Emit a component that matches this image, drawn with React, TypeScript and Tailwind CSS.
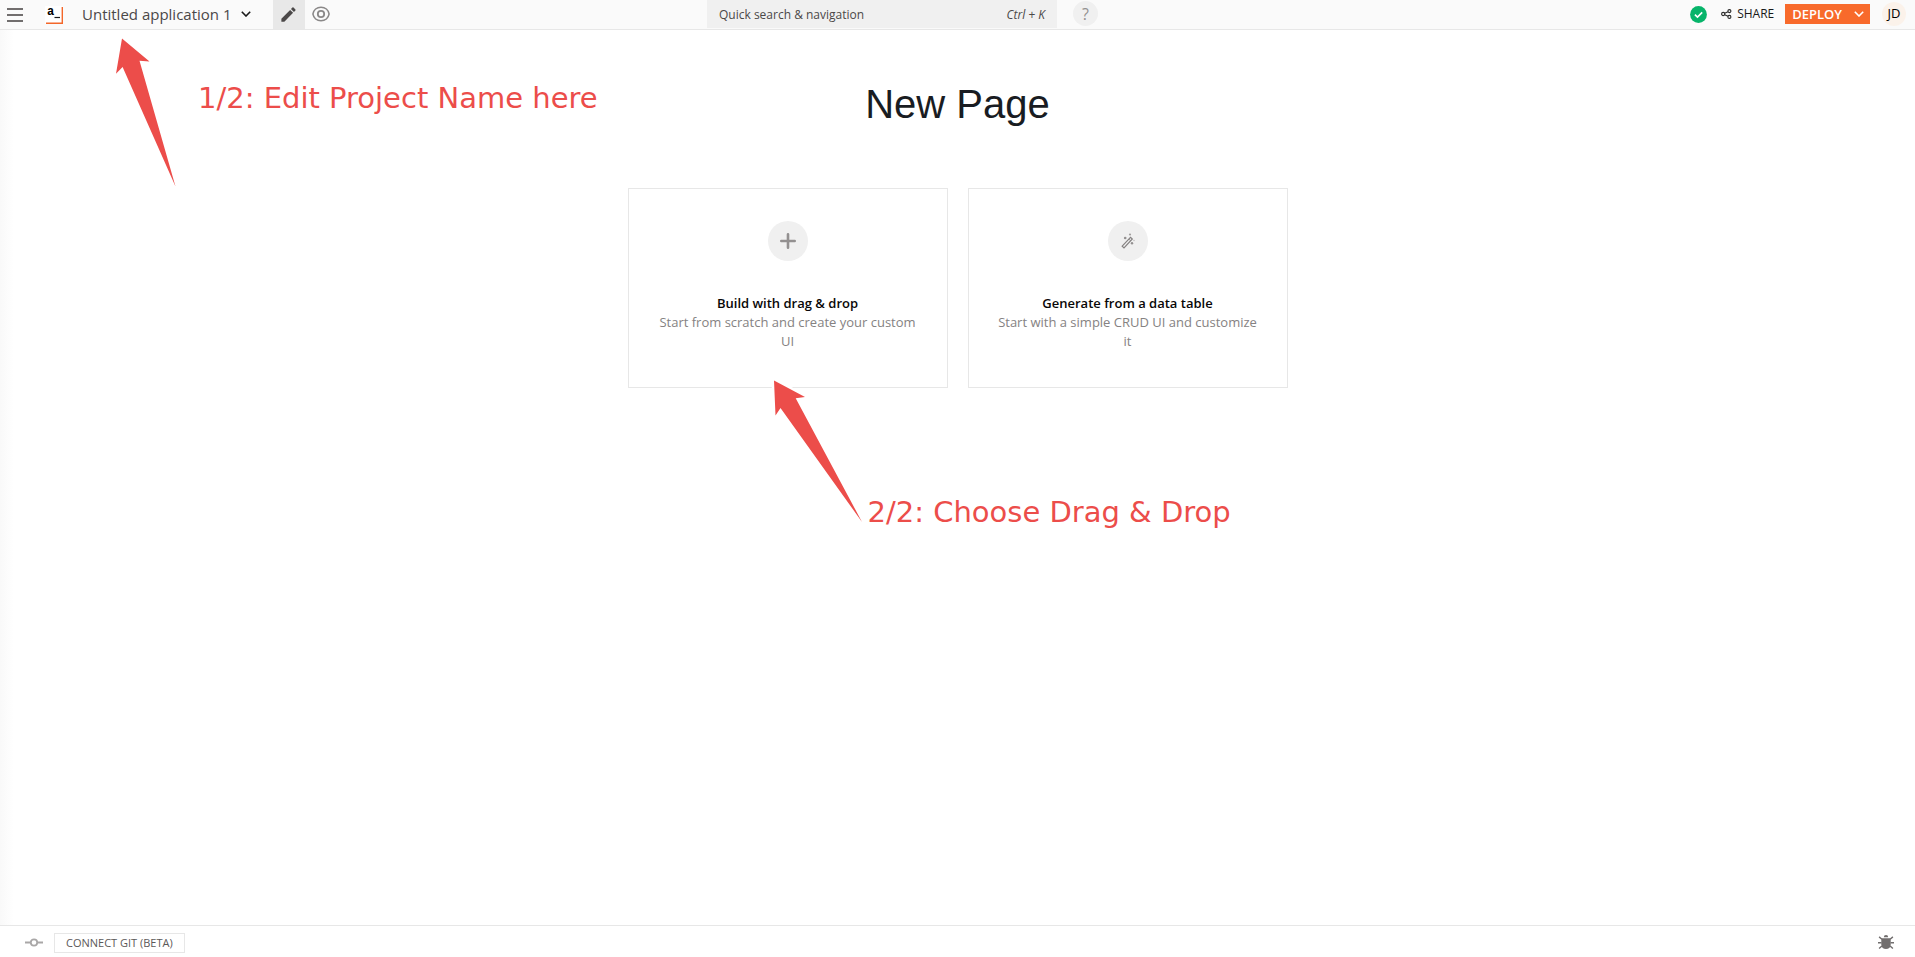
import type { ReactNode } from "react";
import { MdEdit } from "react-icons/md";

const MenuIcon = () => (
  <svg width="16" height="14" viewBox="0 0 16 14" stroke="#716e6e" strokeWidth="2">
    <path d="M0 1h16M0 7h16M0 13h16" />
  </svg>
);

const Logo = () => (
  <span className="relative block size-[18px] bg-white">
    <svg className="absolute inset-0" width="18" height="18" viewBox="0 0 18 18" fill="none">
      <path d="M1 17.300h16.300V1" stroke="#f3672a" strokeWidth="1.400" />
      <path d="M9.500 11.500h5.500" stroke="#191919" strokeWidth="1.200" />
    </svg>
    <span className="absolute -top-0.5 left-0.5 font-['Liberation_Mono',monospace] text-[12px] leading-4 font-bold text-black">
      a
    </span>
  </span>
);

const Chevron = ({ className }: { className: string }) => (
  <svg className={className} width="10" height="6" viewBox="0 0 10 6" fill="none" stroke="currentColor" strokeWidth="1.6">
    <path d="M0.8 0.8 5 5 9.2 0.8" />
  </svg>
);

const EyeIcon = () => (
  <svg width="18" height="16" viewBox="0 0 18 16" fill="none" stroke="#8a8888" strokeWidth="1.5">
    <path d="M9 1.2C4.8 1.2 1.6 4.2 0.9 8c.7 3.8 3.9 6.8 8.1 6.8s7.4-3 8.1-6.8C16.400 4.200 13.200 1.200 9 1.200Z" />
    <circle cx="9" cy="8" r="3.200" strokeWidth="1.800" />
  </svg>
);

const CheckCircle = () => (
  <svg width="17" height="17" viewBox="0 0 17 17" fill="none">
    <circle cx="8.500" cy="8.500" r="8.400" fill="#07b46a" />
    <path d="m4.900 8.600 2.600 2.500 4.700-4.700" stroke="#fff" strokeWidth="1.600" />
  </svg>
);

const ShareIcon = () => (
  <svg width="11" height="10" viewBox="0 0 11 10" fill="none" stroke="#2b2b2b" strokeWidth="1.100">
    <circle cx="2.200" cy="5" r="1.600" />
    <circle cx="8.400" cy="2.100" r="1.500" />
    <circle cx="8.400" cy="7.900" r="1.500" />
    <path d="M3.700 4.300 7 2.700M3.700 5.700 7 7.300" />
  </svg>
);

const PlusIcon = () => (
  <svg width="16" height="16" viewBox="0 0 16 16" stroke="#939090" strokeWidth="2.600" strokeLinecap="round">
    <path d="M8 1.300v13.400M1.300 8h13.400" />
  </svg>
);

const WandIcon = () => (
  <svg width="14" height="16" viewBox="0 0 14 16" fill="none">
    <path d="m1.200 13.200 8.300-8.900 1.800 1.700-8.300 8.900Z" stroke="#858282" strokeWidth="1.200" />
    <path d="m8 6.200 1.500 1.500" stroke="#858282" />
    <circle cx="4.200" cy="5" r="1.300" fill="#939090" />
    <circle cx="9" cy="1.500" r="1.100" fill="#a3a0a0" />
    <circle cx="11" cy="10.200" r="1.200" fill="#939090" />
    <circle cx="13" cy="7.500" r="0.800" fill="#c4c2c2" />
  </svg>
);

const CommitIcon = () => (
  <svg width="18" height="9" viewBox="0 0 18 9" fill="none" stroke="#a9a7a7" strokeWidth="1.800">
    <circle cx="9" cy="4.500" r="3.200" />
    <path d="M0 4.500h5.600M12.400 4.500H18" />
  </svg>
);

const BugIcon = () => (
  <svg width="16" height="15" viewBox="0 0 16 15" fill="#716e6e">
    <path d="M5.800 2.300a2.200 2.200 0 0 1 4.400 0ZM3.300 3.200h9.400v6.600c0 2.600-2.200 4.300-4.700 4.300s-4.700-1.700-4.700-4.300Z" />
    <path
      d="M1.100 1.900 3.900 4.200M14.900 1.900l-2.800 2.300M0 7.700h3.500M16 7.700h-3.500M1.100 13.500l2.800-2.600M14.900 13.500l-2.800-2.600"
      stroke="#716e6e"
      strokeWidth="1.400"
    />
  </svg>
);

function Card({ icon, title, lines }: { icon: ReactNode; title: string; lines: [string, string] }) {
  return (
    <button
      type="button"
      className="flex h-[200px] w-80 flex-col items-center border border-[#e7e7e7] bg-white pt-8 text-[13px] leading-[19px]"
    >
      <span className="flex size-10 items-center justify-center rounded-full bg-[#f0f0f0]">{icon}</span>
      <span className="mt-[33px] font-semibold text-[#090707]">{title}</span>
      <span className="text-[#858282]">
        {lines[0]}
        <br />
        {lines[1]}
      </span>
    </button>
  );
}

export default function App() {
  return (
    <div className="flex min-h-screen flex-col bg-white font-['Open_Sans',sans-serif]">
      <header className="flex h-[30px] items-stretch border-b border-[#e7e7e7] bg-[#fafafa]">
        <div className="flex w-[707px] items-center">
          <button type="button" aria-label="Menu" className="ml-[7px]">
            <MenuIcon />
          </button>
          <a href="#home" aria-label="Home" className="ml-[22px]">
            <Logo />
          </a>
          <button
            type="button"
            className="ml-[19px] flex items-center gap-[9px] pb-0.5 text-[15px] leading-5 font-medium text-[#4b4848]"
          >
            Untitled application 1
            <Chevron className="text-[#191919]" />
          </button>
          <button
            type="button"
            aria-label="Edit mode"
            className="ml-[22px] flex w-8 items-center justify-center self-stretch bg-[#e8e8e8]"
          >
            <MdEdit size={19} color="#4b4848" />
          </button>
          <button type="button" aria-label="Preview mode" className="ml-[7px] pb-px">
            <EyeIcon />
          </button>
        </div>
        <label className="flex h-7 w-[350px] items-center bg-[#f0f0f0] px-3 pt-0.5 text-xs text-[#4b4848]">
          <input
            type="text"
            aria-label="Quick search"
            placeholder="Quick search & navigation"
            className="min-w-0 flex-1 bg-transparent outline-none placeholder:text-[#4b4848]"
          />
          <span className="italic">Ctrl + K</span>
        </label>
        <button
          type="button"
          aria-label="Help"
          className="ml-4 mt-px size-[25px] rounded-full bg-[#f0f0f0] text-base leading-6 text-[#939090]"
        >
          ?
        </button>
        <div className="ml-auto flex items-center pr-[9px] pb-px">
          <CheckCircle />
          <button type="button" className="ml-[14px] flex items-center gap-[5px] text-xs text-[#191919]">
            <ShareIcon />
            SHARE
          </button>
          <div className="ml-[11px] flex h-5 items-stretch bg-[#f86a2b] text-white">
            <button type="button" className="pl-[7px] text-[13px] leading-5 font-semibold">
              DEPLOY
            </button>
            <button type="button" aria-label="Deploy options" className="flex items-center pr-[6px] pl-3">
              <Chevron className="text-white" />
            </button>
          </div>
          <button type="button" className="ml-3 size-6 rounded-full bg-[#fbf2ea] text-[13px] text-black">
            JD
          </button>
        </div>
      </header>

      <main className="relative flex flex-1 flex-col items-center bg-linear-to-r from-[#f9f9f9] to-white to-[14px] pt-[51px]">
        <h1 className="font-['Liberation_Sans',sans-serif] text-[40px] leading-[46px] text-[#191c22]">New Page</h1>
        <div className="relative mt-[61px] flex gap-5">
          <Card
            icon={<PlusIcon />}
            title="Build with drag & drop"
            lines={["Start from scratch and create your custom", "UI"]}
          />
          <Card
            icon={<WandIcon />}
            title="Generate from a data table"
            lines={["Start with a simple CRUD UI and customize", "it"]}
          />
          <svg
            className="pointer-events-none absolute top-[188px] left-[140px]"
            width="100"
            height="150"
            viewBox="0 0 100 150"
          >
            <path
              d="M6 4.500 37 21 27.700 22.300 94 146 12.500 32 7.500 39.500Z"
              fill="#ec4d4a"
              stroke="#fff"
              strokeWidth="5"
              paintOrder="stroke"
            />
          </svg>
          <p className="pointer-events-none absolute top-[306px] left-[240px] font-['DejaVu_Sans',sans-serif] text-[29px] leading-9 whitespace-nowrap text-[#ec4d4a]">
            2/2: Choose Drag &amp; Drop
          </p>
        </div>

        <svg
          className="pointer-events-none absolute top-1 left-[110px]"
          width="70"
          height="156"
          viewBox="0 0 70 156"
          fill="#ec4d4a"
        >
          <path d="M12 4.500 39.500 27.500 29.500 26.700 65.500 152.500 12.600 33 6 39.700Z" />
        </svg>
        <p className="pointer-events-none absolute top-[50px] left-[198px] font-['DejaVu_Sans',sans-serif] text-[29px] leading-9 whitespace-nowrap text-[#ec4d4a]">
          1/2: Edit Project Name here
        </p>
      </main>

      <footer className="flex h-8 items-center border-t border-[#e7e7e7] bg-white pt-0.5 pr-[21px] pl-[25px]">
        <CommitIcon />
        <button
          type="button"
          className="ml-[11px] h-5 border border-[#e7e7e7] px-[11px] text-[11px] leading-[18px] font-medium text-[#5c5959]"
        >
          CONNECT GIT (BETA)
        </button>
        <button type="button" aria-label="Debugger" className="ml-auto">
          <BugIcon />
        </button>
      </footer>
    </div>
  );
}
